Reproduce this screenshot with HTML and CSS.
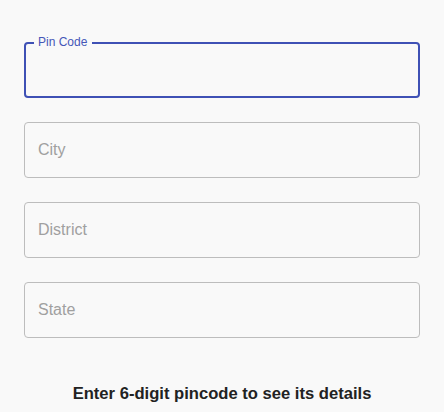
FILE: index.html
```html
<!DOCTYPE html>
<html lang="en">
<head>
<meta charset="utf-8">
<title>Pincode</title>
<link rel="stylesheet" href="styles.css">
</head>
<body>
<main class="page">
  <form class="fields">
    <div class="field field--focused">
      <span class="field__label">Pin Code</span>
      <input class="field__input" type="text" aria-label="Pin Code">
    </div>
    <div class="field">
      <input class="field__input" type="text" placeholder="City">
    </div>
    <div class="field">
      <input class="field__input" type="text" placeholder="District">
    </div>
    <div class="field">
      <input class="field__input" type="text" placeholder="State">
    </div>
  </form>
  <p class="hint">Enter 6-digit pincode to see its details</p>
</main>
</body>
</html>
```
FILE: styles.css
```css
html, body {
  margin: 0;
  padding: 0;
  background: #f9f9f9;
}
body {
  font-family: "Liberation Sans", Arial, sans-serif;
}
.page {
  padding: 42px 24px 0;
}
.fields {
  display: flex;
  flex-direction: column;
  gap: 24px;
  margin: 0;
}
.field {
  position: relative;
  box-sizing: border-box;
  height: 56px;
  border: 1px solid #bdbdbd;
  border-radius: 4px;
  display: flex;
  align-items: center;
}
.field--focused {
  border: 2px solid #3f51b5;
}
.field__label {
  position: absolute;
  left: 8px;
  top: -9px;
  padding: 0 5px 0 4px;
  background: #f9f9f9;
  color: #4557b8;
  font-size: 12px;
  line-height: 14px;
}
.field__input {
  flex: 1;
  min-width: 0;
  border: 0;
  outline: 0;
  background: transparent;
  padding: 0 13px;
  height: 100%;
  font-family: "Liberation Sans", Arial, sans-serif;
  font-size: 16px;
  color: #222;
}
.field--focused .field__input {
  padding: 0 12px;
}
.field__input::placeholder {
  color: #a0a0a0;
  opacity: 1;
}
.hint {
  margin: 46px 0 0;
  text-align: center;
  font-size: 16.6px;
  font-weight: bold;
  color: #222;
}
```
